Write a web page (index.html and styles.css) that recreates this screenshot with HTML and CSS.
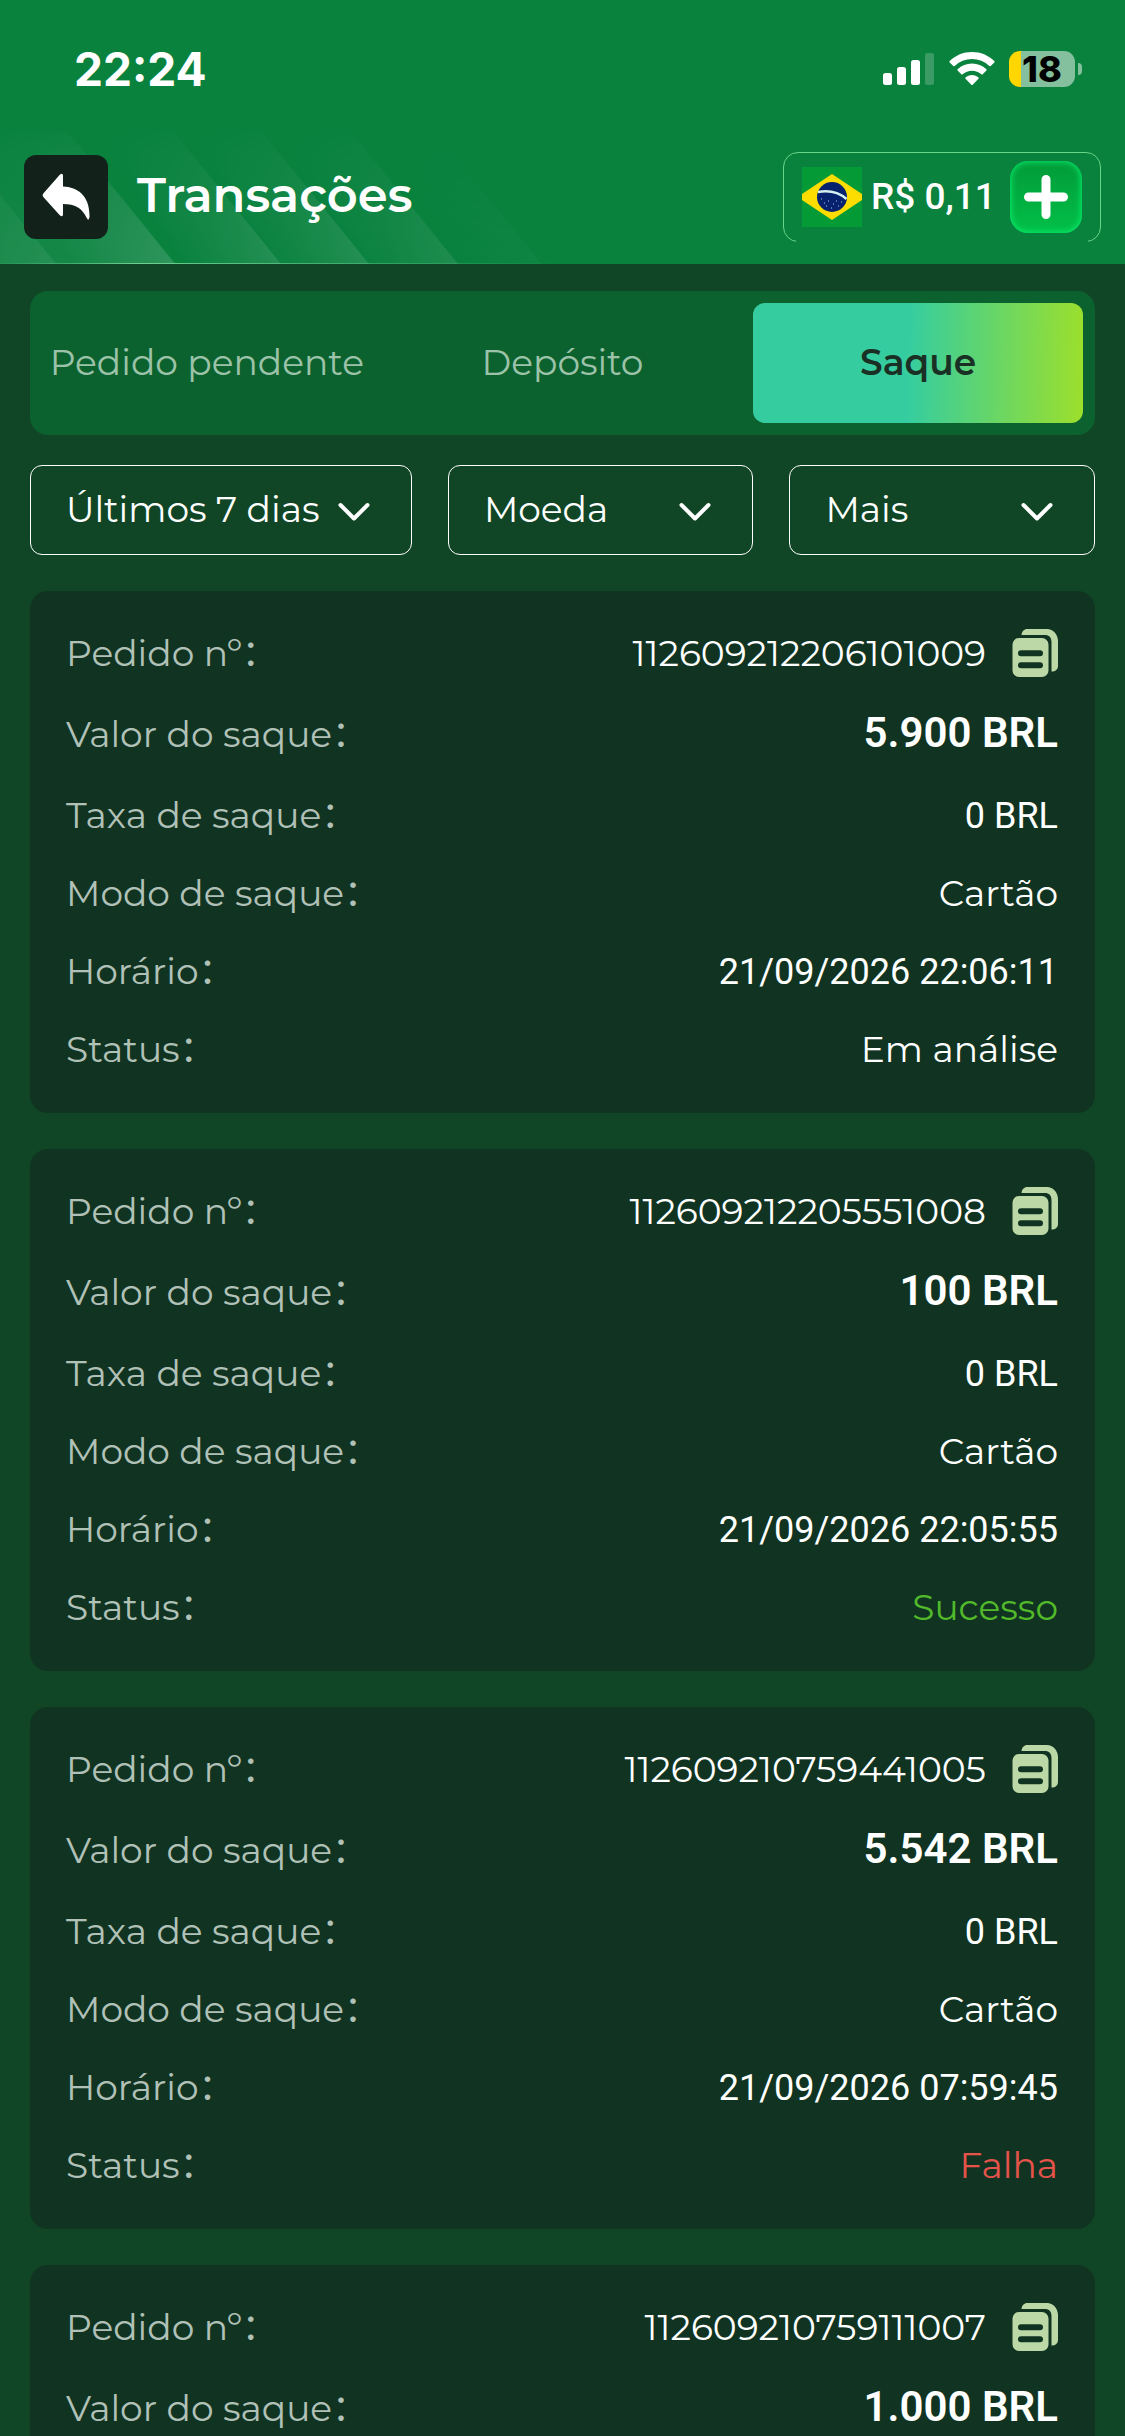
FILE: index.html
```
<!DOCTYPE html>
<html lang="pt-BR">
<head>
  <meta charset="UTF-8">
  <meta name="viewport" content="width=device-width">
  <title>Transações</title>
  <link rel="stylesheet" href="styles.css">
</head>
<body>

<!-- shared icons -->
<svg class="sprite" width="0" height="0" aria-hidden="true">
  <symbol id="icon-copy" viewBox="0 0 46 48">
    <path d="M9.5 6C9.8 2.4 12 0 15.500 0H35C41 0 46 5.500 46 12V37C46 40.500 43.500 42.500 39.500 42.500V13C39.500 8.500 37 6 33 6Z"/>
    <path fill-rule="evenodd" d="M7 9H30A6.500 6.500 0 0 1 36.500 15.500V41.500A6.500 6.500 0 0 1 30 48H7A6.500 6.500 0 0 1 .5 41.500V15.500A6.500 6.500 0 0 1 7 9ZM9 21.300A3 3 0 0 0 9 27.300H28A3 3 0 0 0 28 21.300ZM9 33.200A3 3 0 0 0 9 39.200H28A3 3 0 0 0 28 33.200Z"/>
  </symbol>
  <symbol id="icon-down" viewBox="0 0 32 20">
    <path d="M2.500 3L16 16.500L29.500 3" fill="none" stroke="#fff" stroke-width="4" stroke-linecap="round" stroke-linejoin="round"/>
  </symbol>
</svg>

<div class="page">
  <header class="header">
    <div class="status-bar">
      <span class="time">22:24</span>
      <div class="status-icons">
        <svg width="52" height="34" viewBox="0 0 52 34" fill="#fff">
          <rect x="0" y="21" width="9" height="12" rx="2.500"/>
          <rect x="14" y="15" width="9" height="18" rx="2.500"/>
          <rect x="28" y="8" width="9" height="25" rx="2.500"/>
          <rect x="42" y="1" width="9" height="32" rx="2.500" opacity=".2"/>
        </svg>
        <svg width="46" height="34" viewBox="0 0 46 34" fill="#fff">
          <path d="M23 0C31.500 0 39.500 3.300 45.300 9Q46 9.800 45.300 10.500L41.700 14Q41 14.600 40.300 14A25 25 0 0 0 5.700 14Q5 14.600 4.300 14L.7 10.500Q0 9.800 .7 9C6.500 3.300 14.500 0 23 0Z"/>
          <path d="M23 11.500C28.500 11.500 33.600 13.600 37.400 17.200Q38 17.900 37.400 18.600L33.700 22.200Q33 22.800 32.300 22.200A14 14 0 0 0 13.700 22.200Q13 22.800 12.300 22.200L8.600 18.600Q8 17.900 8.600 17.200C12.400 13.600 17.500 11.500 23 11.500Z"/>
          <path d="M23 23C25.500 23 27.800 23.900 29.500 25.400Q30.200 26 29.500 26.700L23.700 32.700Q23 33.300 22.300 32.700L16.500 26.700Q15.800 26 16.500 25.400C18.200 23.900 20.500 23 23 23Z"/>
        </svg>
        <div class="battery"><span>18</span></div>
      </div>
    </div>

    <div class="title-bar">
      <svg class="stripes" width="560" height="132" viewBox="0 0 560 132" aria-hidden="true">
        <defs>
          <linearGradient id="shine" gradientUnits="userSpaceOnUse" x1="-61" y1="49" x2="0" y2="0">
            <stop offset="0" stop-color="#fff" stop-opacity="0"/>
            <stop offset="1" stop-color="#fff" stop-opacity=".11"/>
          </linearGradient>
          <linearGradient id="fade" x2="0" y2="1">
            <stop offset="0" stop-color="#fff" stop-opacity=".1"/>
            <stop offset="1" stop-color="#fff"/>
          </linearGradient>
          <linearGradient id="edge">
            <stop offset="0" stop-color="#5fc884" stop-opacity=".1"/>
            <stop offset="0.250" stop-color="#6fd090"/>
            <stop offset="1" stop-color="#5fc884" stop-opacity="0"/>
          </linearGradient>
          <mask id="down"><rect width="560" height="132" fill="url(#fade)"/></mask>
          <path id="stripe" d="M-100 0H0L107 132H7Z" fill="url(#shine)"/>
        </defs>
        <g mask="url(#down)">
          <path d="M0 0H69L176 132H0Z" fill="#fff" opacity=".05"/>
          <use href="#stripe" x="-51" opacity=".6"/>
          <use href="#stripe" x="68"/>
          <use href="#stripe" x="174"/>
          <use href="#stripe" x="262"/>
          <use href="#stripe" x="351" opacity=".8"/>
          <use href="#stripe" x="435" opacity=".25"/>
        </g>
        <rect y="131" width="560" height="1" fill="url(#edge)"/>
      </svg>
      <button class="back" aria-label="Voltar">
        <svg width="48" height="48" viewBox="0 0 48 48">
          <path fill="#fff" d="M18 1.500Q21 -.5 21 3V13.500C36 14 48 23 47.500 44Q46.500 49 44.500 44.500C40 35 33 31 21 31V41Q21 44.500 18 42.500L1.300 24Q0 22.300 1.300 20.500Z"/>
        </svg>
      </button>
      <h1>Transações</h1>
      <div class="balance">
        <svg width="60" height="60" viewBox="0 0 60 60" aria-hidden="true">
          <rect width="60" height="60" fill="#049a36"/>
          <path d="M30 7L60 27V33L30 53L0 33V27Z" fill="#fddd00"/>
          <circle cx="30" cy="30" r="15" fill="#06216e"/>
          <path d="M16 25Q33 22 44.500 32" fill="none" stroke="#d5eef0" stroke-width="2.500"/>
          <path d="M19 32h1M22 36h1M26 34h1M31 37h1M36 39h1M39 35h1M29 41h1M24 39h1M34 34h1" stroke="#b9c4e4" stroke-width="1"/>
        </svg>
        <span>R$ 0,11</span>
        <button class="plus" aria-label="Depositar">
          <svg width="44" height="44" viewBox="0 0 44 44">
            <path d="M22 4.500V39.500M4.500 22H39.500" stroke="#fff" stroke-width="9" stroke-linecap="round"/>
          </svg>
        </button>
      </div>
    </div>
  </header>

  <main>
    <nav class="tabs">
      <button>Pedido pendente</button>
      <button>Depósito</button>
      <button class="active">Saque</button>
    </nav>

    <div class="filters">
      <div class="filter">
        <select aria-label="Período"><option>Últimos 7 dias</option></select>
        <svg width="32" height="20"><use href="#icon-down"/></svg>
      </div>
      <div class="filter">
        <select aria-label="Moeda"><option>Moeda</option></select>
        <svg width="32" height="20"><use href="#icon-down"/></svg>
      </div>
      <div class="filter">
        <select aria-label="Mais filtros"><option>Mais</option></select>
        <svg width="32" height="20"><use href="#icon-down"/></svg>
      </div>
    </div>

    <!-- Withdrawals -->
    <dl class="card">
      <div class="row"><dt>Pedido nº：</dt><dd class="order">112609212206101009 <button aria-label="Copiar"><svg width="46" height="48"><use href="#icon-copy"/></svg></button></dd></div>
      <div class="row total"><dt>Valor do saque：</dt><dd class="amount">5.900 BRL</dd></div>
      <div class="row"><dt>Taxa de saque：</dt><dd class="num">0 BRL</dd></div>
      <div class="row"><dt>Modo de saque：</dt><dd>Cartão</dd></div>
      <div class="row"><dt>Horário：</dt><dd class="num">21/09/2026 22:06:11</dd></div>
      <div class="row"><dt>Status：</dt><dd>Em análise</dd></div>
    </dl>

    <dl class="card">
      <div class="row"><dt>Pedido nº：</dt><dd class="order">112609212205551008 <button aria-label="Copiar"><svg width="46" height="48"><use href="#icon-copy"/></svg></button></dd></div>
      <div class="row total"><dt>Valor do saque：</dt><dd class="amount">100 BRL</dd></div>
      <div class="row"><dt>Taxa de saque：</dt><dd class="num">0 BRL</dd></div>
      <div class="row"><dt>Modo de saque：</dt><dd>Cartão</dd></div>
      <div class="row"><dt>Horário：</dt><dd class="num">21/09/2026 22:05:55</dd></div>
      <div class="row"><dt>Status：</dt><dd class="success">Sucesso</dd></div>
    </dl>

    <dl class="card">
      <div class="row"><dt>Pedido nº：</dt><dd class="order">112609210759441005 <button aria-label="Copiar"><svg width="46" height="48"><use href="#icon-copy"/></svg></button></dd></div>
      <div class="row total"><dt>Valor do saque：</dt><dd class="amount">5.542 BRL</dd></div>
      <div class="row"><dt>Taxa de saque：</dt><dd class="num">0 BRL</dd></div>
      <div class="row"><dt>Modo de saque：</dt><dd>Cartão</dd></div>
      <div class="row"><dt>Horário：</dt><dd class="num">21/09/2026 07:59:45</dd></div>
      <div class="row"><dt>Status：</dt><dd class="fail">Falha</dd></div>
    </dl>

    <dl class="card">
      <div class="row"><dt>Pedido nº：</dt><dd class="order">112609210759111007 <button aria-label="Copiar"><svg width="46" height="48"><use href="#icon-copy"/></svg></button></dd></div>
      <div class="row total"><dt>Valor do saque：</dt><dd class="amount">1.000 BRL</dd></div>
    </dl>
  </main>
</div>

</body>
</html>
```
FILE: styles.css
```
* {
  box-sizing: border-box;
}
body {
  margin: 0;
  background: #104626;
  color: #fff;
  font-family: Montserrat, Inter, "Noto Sans CJK SC", sans-serif;
  font-size: 36px;
  font-weight: 400;
  line-height: 52px;
}
button, select {
  font: inherit;
  color: inherit;
  border: none;
  background: none;
  padding: 0;
  cursor: pointer;
}
svg {
  display: block;
  flex: none;
}
.sprite {
  position: absolute;
}
.page {
  height: 100vh;
  display: flex;
  flex-direction: column;
}

/* header */
.header {
  background: #09823e;
}
.status-bar {
  display: flex;
  justify-content: space-between;
  align-items: center;
  height: 132px;
  padding: 6px 50px 0 74px;
}
.time {
  font-family: Inter, sans-serif;
  font-size: 46px;
  font-weight: 700;
}
.status-icons {
  display: flex;
  align-items: center;
  gap: 14px;
}
.battery {
  position: relative;
  width: 66px;
  height: 36px;
  border-radius: 11px;
  background: linear-gradient(90deg, #ffd600 12px, #84c09e 12px);
  color: #000;
  font-family: Inter, sans-serif;
  font-size: 36px;
  font-weight: 800;
  line-height: 36px;
  text-align: center;
}
.battery::after {
  content: "";
  position: absolute;
  left: 69px;
  top: 12px;
  width: 4px;
  height: 12px;
  border-radius: 0 4px 4px 0;
  background: #84c09e;
}
.title-bar {
  position: relative;
  display: flex;
  align-items: center;
  height: 132px;
  padding: 0 24px 2px;
}
.stripes {
  position: absolute;
  left: 0;
  top: 0;
}
.back {
  position: relative;
  display: grid;
  place-items: center;
  width: 84px;
  height: 84px;
  border-radius: 12px;
  background: #12221a;
}
h1 {
  position: relative;
  margin: 0 auto 0 29px;
  padding-bottom: 4px;
  font-size: 48px;
  font-weight: 600;
}
.balance {
  position: relative;
  display: flex;
  align-items: center;
  width: 318px;
  height: 90px;
  padding: 0 18px;
  border: 1px solid #68d488;
  border-radius: 15px;
  font-family: Roboto, sans-serif;
  font-size: 37px;
  font-weight: 500;
}
/* leaves the frame open at the bottom */
.balance::after {
  content: "";
  position: absolute;
  left: 12px;
  right: 12px;
  bottom: -1px;
  height: 2px;
  background: #09823e;
}
.balance span {
  margin: 0 auto 0 9px;
}
.plus {
  display: grid;
  place-items: center;
  width: 72px;
  height: 72px;
  border-radius: 18px;
  background: linear-gradient(#029a38, #02c048);
  box-shadow: inset 0 0 6px 1px #06ec6c;
}

/* content */
main {
  flex: 1;
  min-height: 0;
  padding: 27px 30px;
  overflow-y: auto;
  scrollbar-width: none;
}
.tabs {
  display: grid;
  grid-template-columns: repeat(3, 1fr);
  gap: 26px;
  padding: 12px;
  border-radius: 18px;
  background: #0c622f;
}
.tabs button {
  height: 120px;
  padding-bottom: 2px;
  border-radius: 12px;
  color: #9cc3a9;
  white-space: nowrap;
}
.tabs .active {
  background: linear-gradient(91deg, #35cda0 47%, #9cdf2c);
  color: #1b3025;
  font-weight: 600;
}
.filters {
  display: grid;
  grid-template-columns: 5fr 4fr 4fr;
  gap: 36px;
  margin: 30px 0 36px;
}
.filter {
  position: relative;
}
.filter select {
  display: block;
  width: 100%;
  height: 90px;
  padding: 0 0 2px 35px;
  border: 1px solid #fff;
  border-radius: 12px;
  appearance: none;
}
.filter svg {
  position: absolute;
  right: 42px;
  top: 37px;
  pointer-events: none;
}
.card {
  display: flex;
  flex-direction: column;
  gap: 24px;
  margin: 0 0 36px;
  padding: 36px 37px 36px 36px;
  border-radius: 18px;
  background: #103421;
}
.row {
  display: flex;
  justify-content: space-between;
  align-items: baseline;
  height: 54px;
}
.total {
  height: 60px;
}
dt {
  color: #b1c1b8;
}
dd {
  margin: 0;
}
.num, .amount {
  font-family: Roboto, sans-serif;
}
.amount {
  font-size: 42px;
  font-weight: 600;
  line-height: 56px;
}
.order {
  display: flex;
  align-items: center;
  gap: 26px;
}
.order svg {
  fill: #bcd8a6;
}
.success {
  color: #52b92a;
}
.fail {
  color: #e5534b;
}
```
